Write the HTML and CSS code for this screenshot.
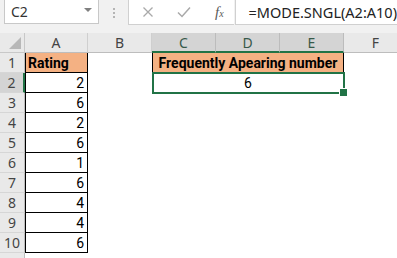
FILE: index.html
```html
<!DOCTYPE html>
<html lang="en">
<head>
    <meta charset="UTF-8">
    <title>MODE.SNGL</title>
    <link rel="stylesheet" href="styles.css">
</head>
<body>
    <div class="app">
        <div class="formula-bar">
            <div class="name-box">
                <span class="name">C2</span>
                <span class="caret"></span>
            </div>
            <div class="grip"><i></i><i></i><i></i></div>
            <div class="fx-box">
                <svg class="btn-icon" width="12" height="12" viewBox="0 0 12 12">
                    <path d="M1.5 1.5 L10.5 10.5 M10.5 1.5 L1.5 10.5" stroke="#a9a9a9" stroke-width="1.3" fill="none"/>
                </svg>
                <svg class="btn-icon" width="14" height="12" viewBox="0 0 14 12">
                    <path d="M1 6.5 L5 10.5 L13 1.5" stroke="#a9a9a9" stroke-width="1.5" fill="none"/>
                </svg>
                <span class="fx">f<sub>x</sub></span>
            </div>
            <div class="formula">=MODE.SNGL(A2:A10)</div>
        </div>
        <div class="strip"></div>

        <div class="sheet">
            <div class="corner">
                <svg width="12" height="12" viewBox="0 0 12 12"><path d="M12 0 L12 12 L0 12 Z" fill="#b8b8b8"/></svg>
            </div>
            <div class="col-head">A</div>
            <div class="col-head">B</div>
            <div class="col-head sel">C</div>
            <div class="col-head sel">D</div>
            <div class="col-head sel">E</div>
            <div class="col-head">F</div>

            <div class="row-head">1</div>
            <div class="cell boxed title">Rating</div>
            <div class="cell"></div>
            <div class="cell merged title-wide">Frequently Apearing number</div>
            <div class="cell"></div>

            <div class="row-head sel">2</div>
            <div class="cell boxed num">2</div>
            <div class="cell"></div>
            <div class="cell merged result">6</div>
            <div class="cell"></div>

            <div class="row-head">3</div>
            <div class="cell boxed num">6</div>
            <div class="cell blank"></div>

            <div class="row-head">4</div>
            <div class="cell boxed num">2</div>
            <div class="cell blank"></div>

            <div class="row-head">5</div>
            <div class="cell boxed num">6</div>
            <div class="cell blank"></div>

            <div class="row-head">6</div>
            <div class="cell boxed num">1</div>
            <div class="cell blank"></div>

            <div class="row-head">7</div>
            <div class="cell boxed num">6</div>
            <div class="cell blank"></div>

            <div class="row-head">8</div>
            <div class="cell boxed num">4</div>
            <div class="cell blank"></div>

            <div class="row-head">9</div>
            <div class="cell boxed num">4</div>
            <div class="cell blank"></div>

            <div class="row-head">10</div>
            <div class="cell boxed num">6</div>
            <div class="cell blank"></div>

            <div class="row-head"></div>
            <div class="cell"></div>
            <div class="cell blank"></div>
        </div>
    </div>
</body>
</html>
```

FILE: styles.css
```css
* {
    box-sizing: border-box;
    margin: 0;
    padding: 0;
}

body {
    background: #ffffff;
    overflow: hidden;
    font-family: 'Noto Sans', sans-serif;
}

.app {
    width: 397px;
    height: 258px;
    overflow: hidden;
    background: #f1f1f1;
}

/* formula bar */
.formula-bar {
    display: flex;
    height: 25px;
    padding-left: 4px;
}

.name-box {
    display: flex;
    align-items: center;
    justify-content: space-between;
    width: 101px;
    height: 25px;
    margin-top: -1px;
    padding: 0 6px 0 6px;
    background: #ffffff;
    border: 1px solid #c8c8c8;
}

.name {
    font-size: 14px;
    color: #333333;
}

.caret {
    width: 0;
    height: 0;
    border-left: 4px solid transparent;
    border-right: 4px solid transparent;
    border-top: 4px solid #808080;
    margin-top: -3px;
}

.grip {
    width: 31px;
    display: flex;
    flex-direction: column;
    align-items: center;
    justify-content: center;
    gap: 2px;
}

.grip i {
    display: block;
    width: 2px;
    height: 2px;
    background: #b4b4b4;
}

.fx-box {
    display: flex;
    align-items: center;
    width: 112px;
    height: 25px;
    background: #ffffff;
    border-left: 1px solid #d0d0d0;
    border-bottom: 1px solid #d0d0d0;
    padding-left: 13px;
}

.btn-icon {
    margin-right: 23px;
}

.btn-icon + .btn-icon {
    margin-right: 24px;
}

.fx {
    font-family: 'Liberation Serif', serif;
    font-style: italic;
    font-size: 15px;
    color: #5a5a5a;
}

.fx sub {
    font-size: 10px;
    vertical-align: 0;
}

.formula {
    flex: 1;
    height: 25px;
    margin-left: 1px;
    padding-left: 13px;
    background: #ffffff;
    border-left: 1px solid #d0d0d0;
    border-bottom: 1px solid #d0d0d0;
    font-size: 14.5px;
    line-height: 24px;
    color: #222222;
    white-space: nowrap;
}

.strip {
    height: 8px;
}

/* grid */
.sheet {
    display: grid;
    grid-template-columns: 25px 63px 64px 64px 64px 64px 64px;
    grid-template-rows: repeat(12, 20px);
    background: #ffffff;
    font-family: 'Roboto', sans-serif;
    font-size: 14px;
    color: #000000;
}

.corner {
    display: flex;
    align-items: flex-end;
    justify-content: flex-end;
    padding: 0 3px 3px 0;
    background: #e9e9e9;
    border-right: 1px solid #c8c8c8;
    border-bottom: 1px solid #c8c8c8;
}

.col-head,
.row-head {
    display: flex;
    align-items: center;
    justify-content: center;
    background: #e9e9e9;
    font-family: 'Noto Sans', sans-serif;
    font-size: 14px;
    color: #444444;
}

.col-head {
    border-right: 1px solid #cfcfcf;
    border-bottom: 1px solid #bdbdbd;
}

.col-head.sel {
    background: #d4d4d4;
    color: #37594a;
    border-right-color: #bcbcbc;
    border-bottom: 2px solid #217346;
}

.row-head {
    border-right: 1px solid #bdbdbd;
    border-bottom: 1px solid #d6d6d6;
}

.row-head.sel {
    background: #d4d4d4;
    border-right: 2px solid #217346;
}

.cell {
    display: flex;
    align-items: center;
    white-space: nowrap;
}

.blank {
    grid-column: span 5;
}

.boxed {
    border-left: 1px solid #000000;
    border-right: 1px solid #000000;
    border-bottom: 1px solid #000000;
}

.title {
    background: #f4b183;
    font-weight: bold;
    padding-left: 2px;
}

.num {
    justify-content: flex-end;
    padding-right: 3px;
}

.merged {
    grid-column: span 3;
    justify-content: center;
}

.title-wide {
    background: #f4b183;
    font-weight: bold;
    border-left: 1px solid #000000;
    border-right: 1px solid #000000;
    border-bottom: 1px solid #000000;
}

.result {
    position: relative;
}

.result::after {
    content: '';
    position: absolute;
    top: -1px;
    left: 0;
    right: -1px;
    bottom: -1px;
    border: 2px solid #217346;
}

.result::before {
    content: '';
    position: absolute;
    right: -4px;
    bottom: -4px;
    width: 7px;
    height: 7px;
    background: #217346;
    border: 1px solid #ffffff;
    z-index: 1;
}
```
